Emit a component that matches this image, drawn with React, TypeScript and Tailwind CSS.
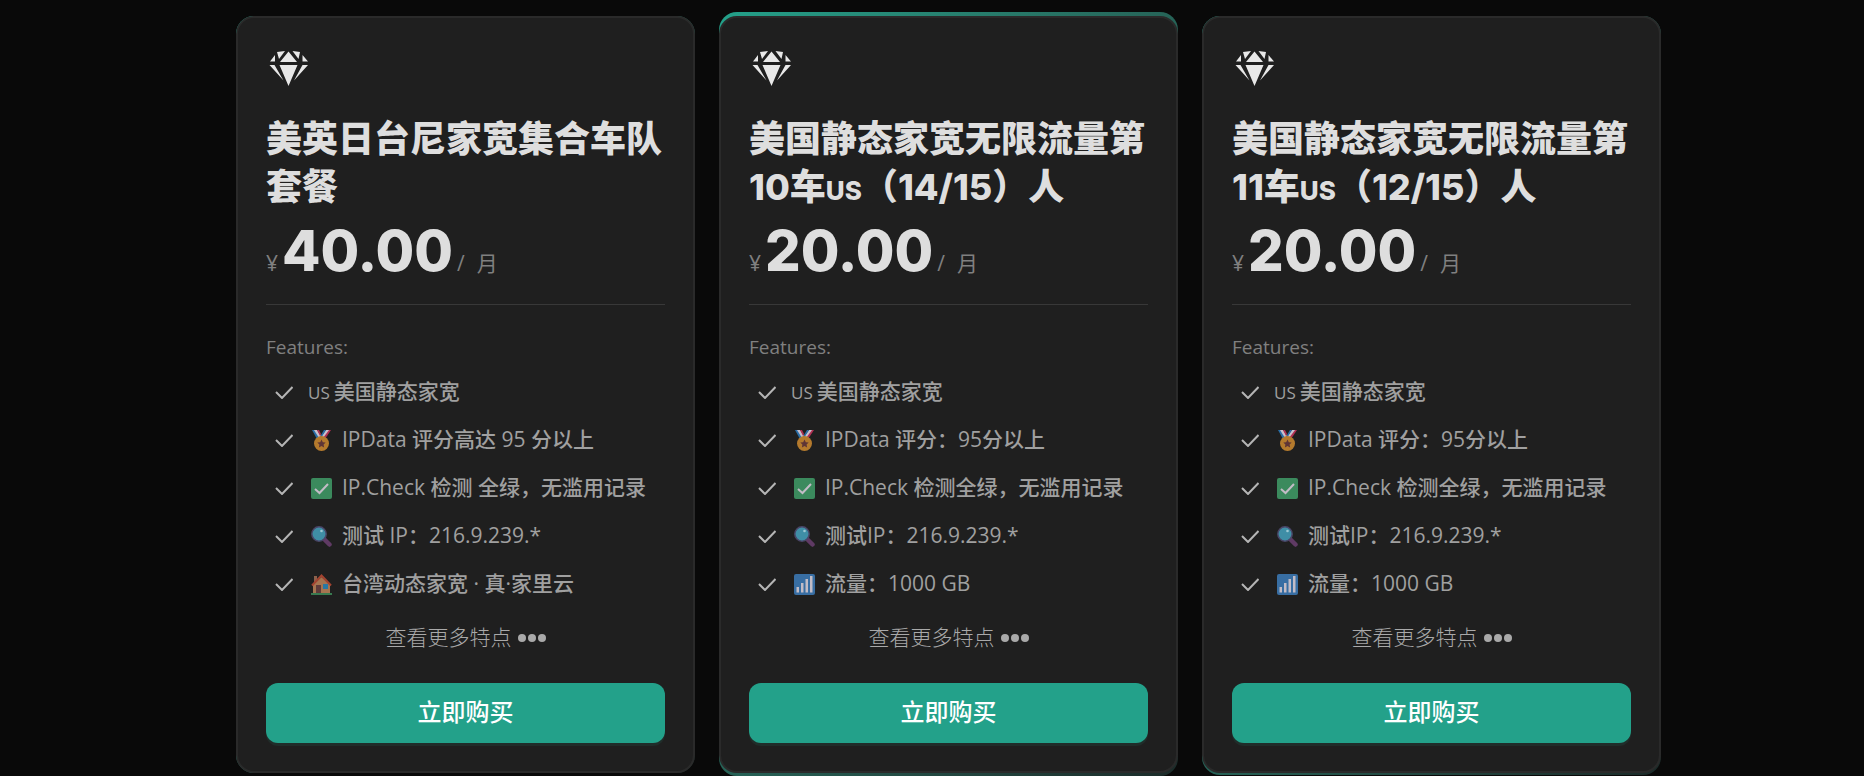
import * as React from "react";

type IconName = "medal" | "check" | "search" | "house" | "bars";

type Feature = {
  icon?: IconName;
  region?: string;
  text: string;
};

type Plan = {
  id: string;
  title: React.ReactNode;
  price: string;
  features: Feature[];
  glow: string;
};

const Region = ({ children }: { children: string }) => (
  <span className="text-[26px] leading-none">{children}</span>
);

const sharedFeatures: Feature[] = [
  { region: "US", text: "美国静态家宽" },
  { icon: "medal", text: "IPData 评分：95分以上" },
  { icon: "check", text: "IP.Check 检测全绿，无滥用记录" },
  { icon: "search", text: "测试IP：216.9.239.*" },
  { icon: "bars", text: "流量：1000 GB" },
];

const plans: Plan[] = [
  {
    id: "mix",
    title: "美英日台尼家宽集合车队套餐",
    price: "40.00",
    features: [
      { region: "US", text: "美国静态家宽" },
      { icon: "medal", text: "IPData 评分高达 95 分以上" },
      { icon: "check", text: "IP.Check 检测 全绿，无滥用记录" },
      { icon: "search", text: "测试 IP：216.9.239.*" },
      { icon: "house", text: "台湾动态家宽 · 真·家里云" },
    ],
    glow: "inset-0",
  },
  {
    id: "us-10",
    title: <>美国静态家宽无限流量第10车<Region>US</Region>（14/15）人</>,
    price: "20.00",
    features: sharedFeatures,
    glow: "-top-1 inset-x-0 -bottom-[3px]",
  },
  {
    id: "us-11",
    title: <>美国静态家宽无限流量第11车<Region>US</Region>（12/15）人</>,
    price: "20.00",
    features: sharedFeatures,
    glow: "top-0 inset-x-0 -bottom-0.5",
  },
];

export default function App() {
  return (
    <main className="min-h-screen overflow-hidden bg-[#090909] pt-4 pr-4 pb-[3px] pl-[49px] font-['Open_Sans','Noto_Sans_CJK_SC',sans-serif]">
      <div className="mx-auto grid max-w-[1425px] grid-cols-3 gap-6">
        {plans.map((plan) => (
          <PlanCard key={plan.id} plan={plan} />
        ))}
      </div>
    </main>
  );
}

function PlanCard({ plan }: { plan: Plan }) {
  return (
    <article className="relative">
      <div className={`absolute rounded-[18px] bg-linear-to-br from-[#23a18a] to-[#1b2b29] ${plan.glow}`} />
      <div className="relative rounded-[18px] border-2 border-[#2a2a2a] bg-[#1f1f1f] px-7 pt-7 pb-7">
        <DiamondIcon />
        <h2 className="mt-6 text-[36px] leading-12 font-extrabold text-[#dedede] font-['Inter','Noto_Sans_CJK_SC',sans-serif]">
          {plan.title}
        </h2>
        <p className="flex h-20 items-baseline text-[21px] leading-20 text-[#808080]">
          <span className="mr-1 w-3">¥</span>
          <span className="text-[56px] font-extrabold text-[#dedede] font-['Inter',sans-serif]">{plan.price}</span>
          <span className="ml-1">/</span>
          <span className="ml-3">月</span>
        </p>
        <hr className="mt-[13px] border-[#383838]" />
        <h3 className="mt-7 text-[19px] leading-7 text-[#808080]">Features:</h3>
        <ul className="mt-[7px] text-[21px] font-medium text-[#a0a0a0]">
          {plan.features.map((feature) => (
            <li key={feature.text} className="flex h-12 items-center whitespace-nowrap">
              <CheckIcon />
              {feature.icon ? <FeatureIcon name={feature.icon} /> : null}
              <span>
                {feature.region ? <span className="mr-1 text-[17px]">{feature.region}</span> : null}
                {feature.text}
              </span>
            </li>
          ))}
        </ul>
        <button type="button" className="mx-auto mt-1.5 flex h-12 items-center gap-1.5 text-[21px] font-light text-[#a9a9a9]">
          查看更多特点
          <DotsIcon />
        </button>
        <button
          type="button"
          className="mt-[21px] h-[60px] w-full rounded-xl bg-[#23a18a] pb-0.5 text-[24px] font-medium text-white shadow-[0_3px_0_#202d2a]"
        >
          立即购买
        </button>
      </div>
    </article>
  );
}

function DiamondIcon() {
  return (
    <svg viewBox="0 0 45 45" className="size-[45px] fill-[#e8e8e8]" aria-hidden="true">
      <path d="M4 15.500 9 9v6.500zM11 6l8-1-6 8zM22.500 5.500l8.500 10.500H14zM26.500 5l7.500 1-1.500 7zM36.500 9l5.500 6.500h-5.500zM3.500 19h5l9 15.500zM13.500 19h18l-9 21zM36.500 19h5.500L28 34.500z" />
    </svg>
  );
}

function CheckIcon() {
  return (
    <svg viewBox="0 0 18 13" className="mr-[15px] ml-[9px] h-[13px] w-[18px] shrink-0" fill="none" stroke="#b5b5b5" strokeWidth="2" aria-hidden="true">
      <path d="m1 6 6 6L17.500 1" />
    </svg>
  );
}

function DotsIcon() {
  return (
    <svg viewBox="0 0 28 8" className="h-2 w-7 fill-[#a9a9a9]" aria-hidden="true">
      <circle cx="4" cy="4" r="4" />
      <circle cx="14" cy="4" r="4" />
      <circle cx="24" cy="4" r="4" />
    </svg>
  );
}

function FeatureIcon({ name }: { name: IconName }) {
  return (
    <svg viewBox="0 0 21 21" className="mr-2.5 ml-[3px] size-[21px] shrink-0" aria-hidden="true">
      {icons[name]}
    </svg>
  );
}

const icons: Record<IconName, React.ReactNode> = {
  medal: (
    <>
      <path fill="#2a6fa8" d="M1 0h4l5 8-4 1z" />
      <path fill="#c8c0cc" d="M3 0h3l4 6-2 2z" />
      <path fill="#b03052" d="M6 0h2l2 4-1 2z" />
      <path fill="#b03052" d="M20 0h-4l-6 8 4 1z" />
      <path fill="#c8c0cc" d="M18 0h-3l-5 7 2 1z" />
      <path fill="#2a6fa8" d="M15 0h-2l-3 5v3z" />
      <circle cx="10.500" cy="13.500" r="7.500" fill="#b47a2d" />
      <path fill="#5e3536" d="m10.500 9.500 1.300 2.700 2.900.4-2.100 2 .5 2.900-2.600-1.400-2.600 1.400.5-2.900-2.100-2 2.900-.4z" />
    </>
  ),
  check: (
    <>
      <rect width="21" height="21" rx="2" fill="#3b8a5d" />
      <path d="m4 11 4.500 4L17 6" fill="none" stroke="#c2bcc6" strokeWidth="2" />
    </>
  ),
  search: (
    <>
      <path d="m14 14 4.500 4.500" stroke="#5f3a64" strokeWidth="4.500" strokeLinecap="round" />
      <circle cx="8" cy="8" r="7.200" fill="#3f8ea6" stroke="#4a4668" strokeWidth="1.500" />
      <circle cx="10.500" cy="5" r="1.300" fill="#9cc8d3" />
    </>
  ),
  house: (
    <>
      <path fill="#8c604b" d="M3 2h3v6H3z" />
      <path fill="#a57450" d="M10.500 3 19 11v8H2v-8z" />
      <path d="m1 11.500 9.500-10L20 11.500" fill="none" stroke="#a34330" strokeWidth="2" />
      <path fill="#5f3b3a" d="M5 11h5v8H5z" />
      <path fill="#2877a3" d="M12 10h5v5h-5z" />
      <path fill="#387a50" d="M0 19h21v2H0z" />
    </>
  ),
  bars: (
    <>
      <rect width="21" height="21" rx="2" fill="#386ea3" />
      <path fill="#c2bcc6" d="M2.500 13H5v5.500H2.500zM7 9h2.500v9.500H7zM11.500 5H14v13.500h-2.500zM16 2h2.500v16.500H16z" />
    </>
  ),
};
